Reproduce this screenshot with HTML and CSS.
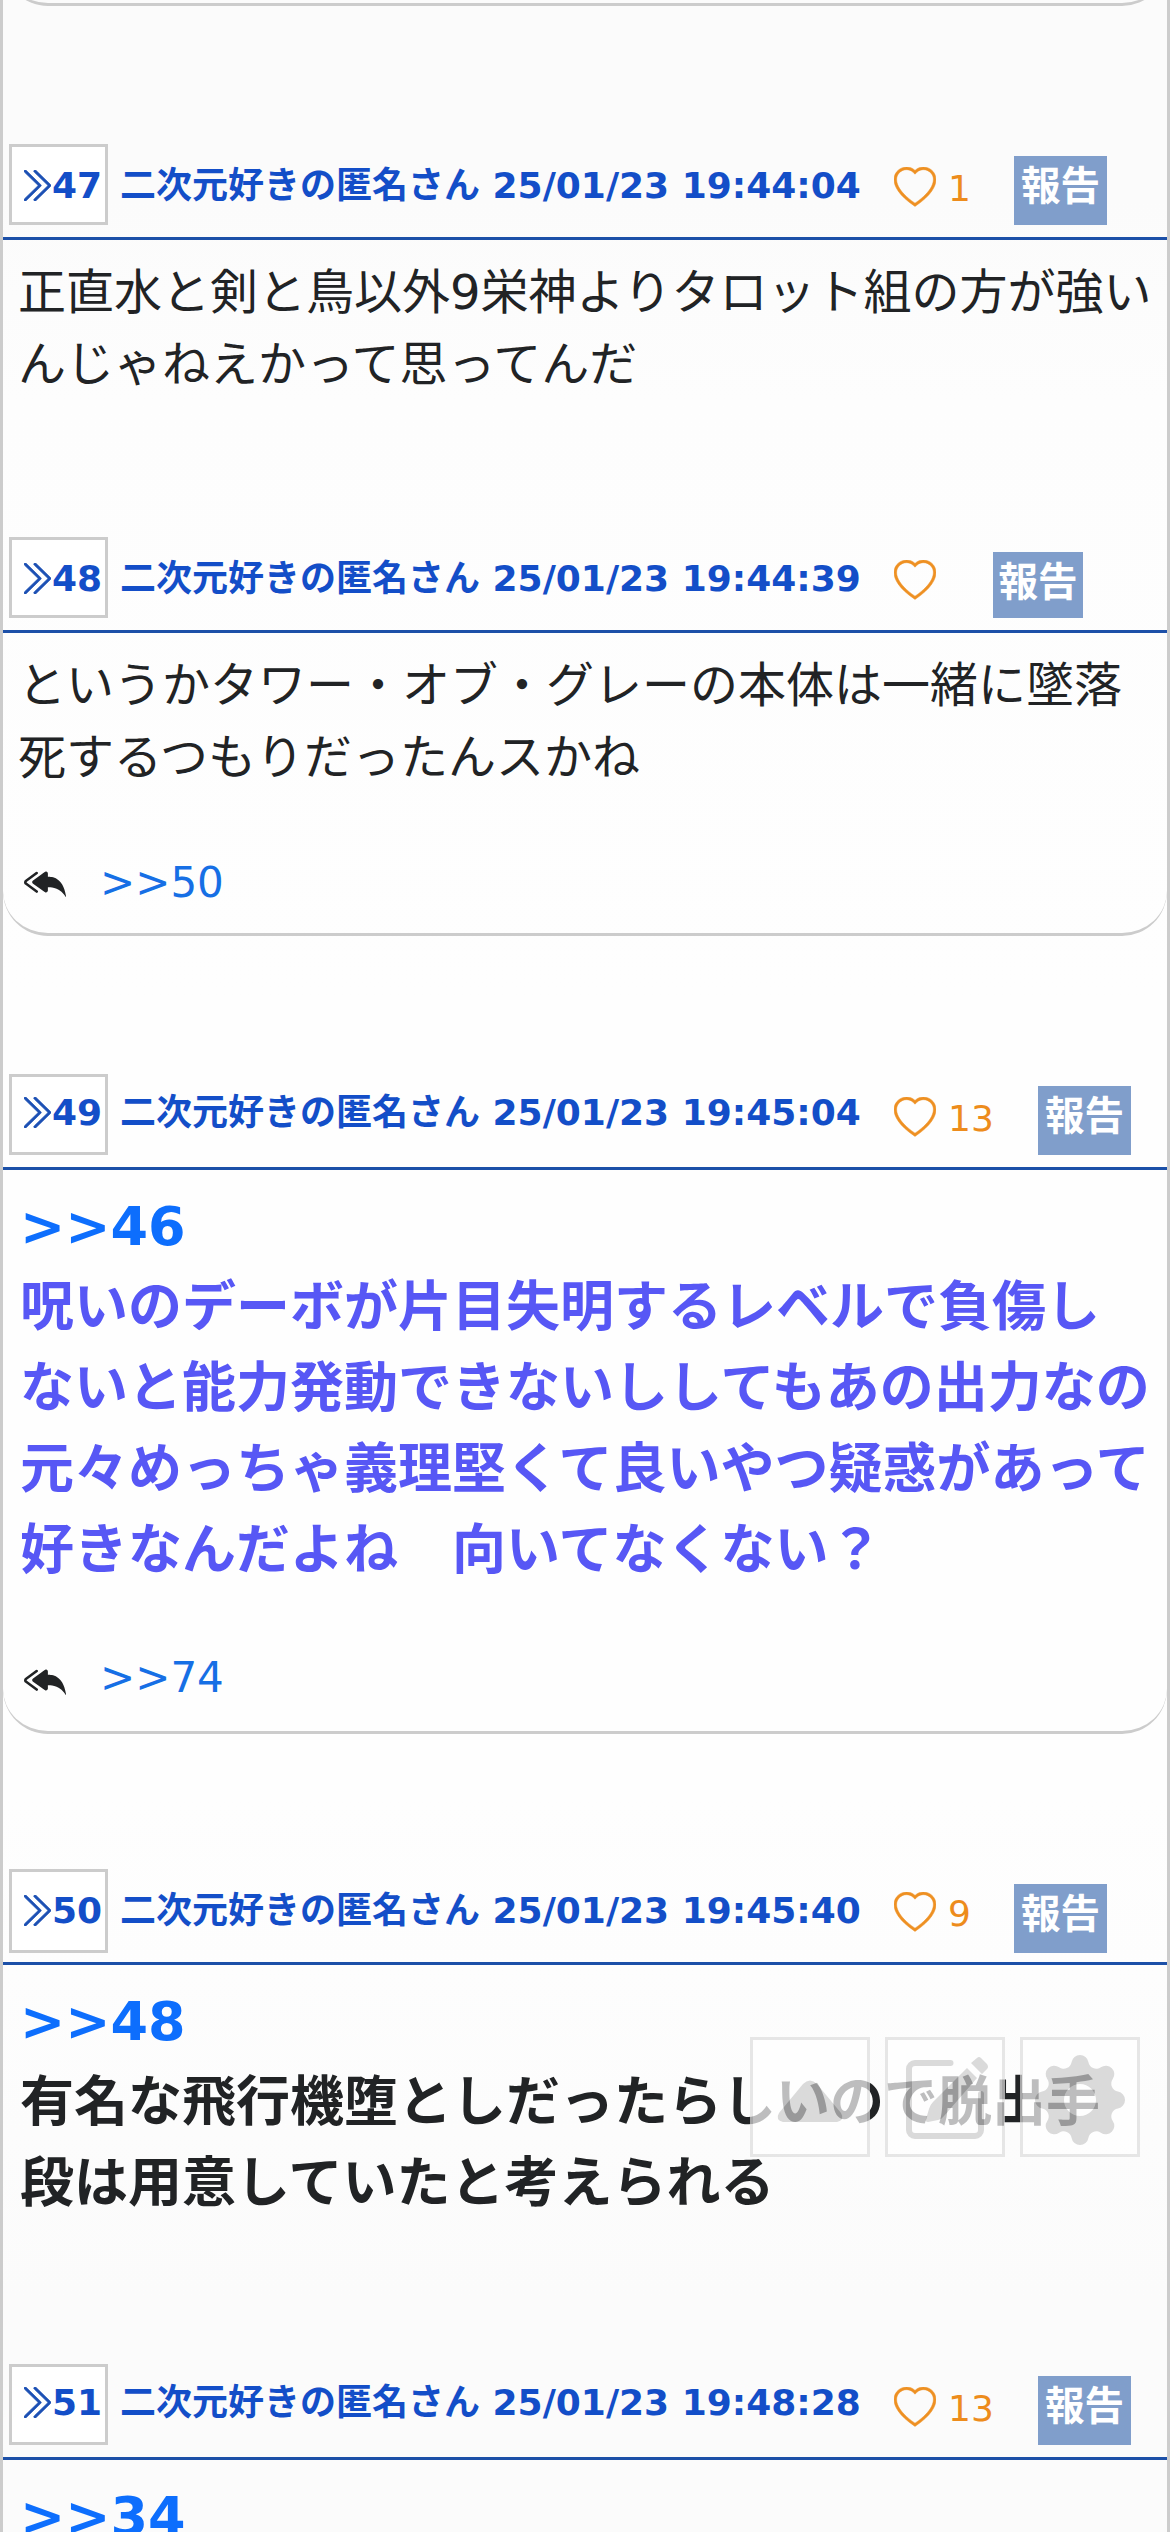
FILE: index.html
```html
<!DOCTYPE html>
<html lang="ja">
<head>
<meta charset="utf-8">
<title>スレッド</title>
<link rel="stylesheet" href="styles.css">
</head>
<body>
<svg class="symbols" aria-hidden="true">
  <symbol id="chevrons" viewBox="3.5 1.5 11 13" preserveAspectRatio="none">
    <path d="M3.646 1.646a.5.5 0 0 1 .708 0l6 6a.5.5 0 0 1 0 .708l-6 6a.5.5 0 0 1-.708-.708L9.293 8 3.646 2.354a.5.5 0 0 1 0-.708z"/>
    <path d="M7.646 1.646a.5.5 0 0 1 .708 0l6 6a.5.5 0 0 1 0 .708l-6 6a.5.5 0 0 1-.708-.708L13.293 8 7.646 2.354a.5.5 0 0 1 0-.708z"/>
  </symbol>
  <symbol id="heart" viewBox="0 0 16 16">
    <path d="m8 2.748-.717-.737C5.6.281 2.514.878 1.4 3.053c-.523 1.023-.641 2.5.314 4.385.92 1.815 2.834 3.989 6.286 6.357 3.452-2.368 5.365-4.542 6.286-6.357.955-1.886.838-3.362.314-4.385C13.486.878 10.4.28 8.717 2.01zM8 15C-7.333 4.868 3.279-3.04 7.824 1.143q.09.083.176.171a3 3 0 0 1 .176-.17C12.72-3.042 23.333 4.867 8 15"/>
  </symbol>
  <symbol id="reply-all" viewBox="0 0 16 16">
    <path d="M8.021 11.9 3.453 8.62a.719.719 0 0 1 0-1.238L8.021 4.1a.716.716 0 0 1 1.079.619V6c1.5 0 6 0 7 8-2.5-4.5-7-4-7-4v1.281c0 .56-.606.898-1.079.62z"/>
    <path d="M5.232 4.293a.5.5 0 0 1-.106.7L1.114 7.945l-.042.028a.147.147 0 0 0 0 .252l.042.028 4.012 2.954a.5.5 0 1 1-.593.805L.539 9.073a1.147 1.147 0 0 1 0-1.946l3.994-2.94a.5.5 0 0 1 .699.106z"/>
  </symbol>
</svg>
<main class="thread">
  <div class="previous"></div>

  <article class="post">
    <header class="head">
      <a class="number"><svg><use href="#chevrons"/></svg>47</a>
      <span class="name">二次元好きの匿名さん 25/01/23 19:44:04</span>
      <svg class="heart"><use href="#heart"/></svg>
      <span class="count">1</span>
      <a class="report">報告</a>
    </header>
    <div class="body body-short">正直水と剣と鳥以外9栄神よりタロット組の方が強い<br>んじゃねえかって思ってんだ</div>
  </article>

  <article class="post">
    <header class="head">
      <a class="number"><svg><use href="#chevrons"/></svg>48</a>
      <span class="name">二次元好きの匿名さん 25/01/23 19:44:39</span>
      <svg class="heart"><use href="#heart"/></svg>
      <a class="report report-empty">報告</a>
    </header>
    <div class="body">というかタワー・オブ・グレーの本体は一緒に墜落<br>死するつもりだったんスかね</div>
    <footer class="replies"><svg><use href="#reply-all"/></svg><a>&gt;&gt;50</a></footer>
  </article>

  <article class="post">
    <header class="head head-popular">
      <a class="number"><svg><use href="#chevrons"/></svg>49</a>
      <span class="name">二次元好きの匿名さん 25/01/23 19:45:04</span>
      <svg class="heart"><use href="#heart"/></svg>
      <span class="count">13</span>
      <a class="report">報告</a>
    </header>
    <div class="body large violet"><a>&gt;&gt;46</a><br>呪いのデーボが片目失明するレベルで負傷し<br>ないと能力発動できないししてもあの出力なの<br>元々めっちゃ義理堅くて良いやつ疑惑があって<br>好きなんだよね　向いてなくない？</div>
    <footer class="replies replies-large"><svg><use href="#reply-all"/></svg><a>&gt;&gt;74</a></footer>
  </article>

  <article class="post post-close">
    <header class="head head-tall">
      <a class="number"><svg><use href="#chevrons"/></svg>50</a>
      <span class="name">二次元好きの匿名さん 25/01/23 19:45:40</span>
      <svg class="heart"><use href="#heart"/></svg>
      <span class="count">9</span>
      <a class="report">報告</a>
    </header>
    <div class="body large body-last"><a>&gt;&gt;48</a><br>有名な飛行機堕としだったらしいので脱出手<br>段は用意していたと考えられる</div>
  </article>

  <article class="post">
    <header class="head head-popular">
      <a class="number"><svg><use href="#chevrons"/></svg>51</a>
      <span class="name">二次元好きの匿名さん 25/01/23 19:48:28</span>
      <svg class="heart"><use href="#heart"/></svg>
      <span class="count">13</span>
      <a class="report">報告</a>
    </header>
    <div class="body large"><a>&gt;&gt;34</a></div>
  </article>
</main>

<nav class="tools">
  <a class="tool"><svg viewBox="0 0 120 120"><path d="M33 85Q25 83 29 76L53 47Q60 40 67 47L91 76Q95 83 87 85Z"/></svg></a>
  <a class="tool"><svg viewBox="0 0 120 120">
    <path class="line" d="M65.500 26H30a6 6 0 0 0-6 6V93a6 6 0 0 0 6 6H90a6 6 0 0 0 6-6V57"/>
    <path d="M92 21Q94 19 96 21L102 27Q104 30 102 32L97 37L86 26ZM82 31L92 41L59 79Q57 82 53 83L43 85Q40 85 41 82L44 72Q45 68 48 65Z"/>
  </svg></a>
  <a class="tool"><svg viewBox="-60 -63 120 120"><path fill-rule="evenodd" d="M-8.380-37.930A8.500 8.500 0 0 1 8.380-37.930A8 8 0 0 0 20.890-32.740A8.500 8.500 0 0 1 32.740-20.890A8 8 0 0 0 37.930-8.380A8.500 8.500 0 0 1 37.930 8.380A8 8 0 0 0 32.740 20.890A8.500 8.500 0 0 1 20.890 32.740A8 8 0 0 0 8.380 37.930A8.500 8.500 0 0 1-8.380 37.930A8 8 0 0 0-20.890 32.740A8.500 8.500 0 0 1-32.740 20.890A8 8 0 0 0-37.930 8.380A8.500 8.500 0 0 1-37.930-8.380A8 8 0 0 0-32.740-20.890A8.500 8.500 0 0 1-20.890-32.740A8 8 0 0 0-8.380-37.930ZM0-16A16 16 0 0 0 0 16A16 16 0 0 0 0-16Z"/></svg></a>
</nav>
</body>
</html>
```
FILE: styles.css
```css
* {
  box-sizing: border-box;
}

body {
  position: relative;
  height: 2532px;
  margin: 0;
  overflow: hidden;
  color: #212325;
  font-family: "DejaVu Sans", "Noto Sans CJK JP", sans-serif;
  white-space: nowrap;
}

.symbols {
  display: none;
}

.thread {
  display: flow-root;
  height: 2532px;
  overflow: hidden;
  border: solid #ccc;
  border-width: 0 3px;
  background: linear-gradient(#fbfbfb 0, #fbfbfb 200px, #fdfdfd 400px, #fefefe 1000px, #fefefe 1800px, #fbfbfb 2300px);
}

.previous {
  height: 60px;
  margin-top: -54px;
  border-bottom: 3px solid #ccc;
  border-radius: 0 0 45px 45px;
}

.post {
  padding-top: 138px;
}

.post-close {
  padding-top: 135px;
}

.head {
  display: flex;
  align-items: flex-start;
  height: 96px;
  padding-left: 6px;
  border-bottom: 3px solid #1c50a8;
  color: #134ec8;
  font-size: 36px;
  line-height: 42px;
}

.number {
  display: flex;
  gap: 1px;
  width: 99px;
  height: 81px;
  padding: 18px 0 0 12px;
  border: 3px solid #ccc;
  background: #fff;
  font-weight: bold;
}

.head-tall .number {
  height: 84px;
}

.number svg {
  flex: none;
  width: 27px;
  height: 31px;
  margin-top: 5px;
  fill: #1c50b4;
  stroke: #1c50b4;
  stroke-width: .3;
}

.name {
  width: 774px;
  margin-left: 12px;
  padding-top: 21px;
  font-weight: bold;
}

.head-popular .number {
  padding-top: 15px;
}

.head-popular .name {
  padding-top: 18px;
}

.heart {
  flex: none;
  width: 42px;
  height: 42px;
  margin-top: 23px;
  fill: #ee9022;
  stroke: #ee9022;
  stroke-width: .2;
}

.count {
  width: 22px;
  margin-left: 12px;
  padding-top: 24px;
  color: #ed8c1c;
}

.head-popular .count {
  width: 46px;
}

.report {
  width: 93px;
  height: 69px;
  margin: 12px 0 0 44px;
  background: #809ecb;
  color: #fff;
  font-size: 39.6px;
  font-weight: bold;
  line-height: 60px;
  text-align: center;
}

.head-tall .report {
  margin-top: 15px;
}

.report-empty {
  width: 90px;
  height: 66px;
  margin: 15px 0 0 57px;
}

.body {
  padding: 16px 0 0 15px;
  font-size: 48px;
  line-height: 72px;
}

.body-short {
  height: 159px;
}

.large {
  padding-left: 17px;
  font-size: 54px;
  font-weight: bold;
  line-height: 81px;
}

.body-last {
  height: 261px;
}

.violet {
  color: #5757f5;
}

.large a {
  color: #0d6efd;
}

.replies {
  display: flex;
  height: 143px;
  padding: 58px 0 0 21px;
  border-bottom: 3px solid #ccc;
  border-radius: 0 0 45px 45px;
  font-size: 42px;
  line-height: 63px;
}

.replies svg {
  width: 42px;
  height: 42px;
  margin: 10px 34px 0 0;
  fill: #212325;
}

.replies a {
  color: #166fe5;
}

.replies-large {
  padding-top: 55px;
}

.replies-large svg {
  margin-top: 13px;
}

.tools {
  position: absolute;
  top: 2037px;
  right: 30px;
  display: flex;
  gap: 15px;
}

.tool {
  width: 120px;
  height: 120px;
  border: 3px solid #ddd;
  background: #fff;
  opacity: .7;
}

.tool svg {
  display: block;
  width: 120px;
  height: 120px;
  margin: -3px;
  fill: #ccc;
}

.tool .line {
  fill: none;
  stroke: #ccc;
  stroke-width: 6;
  stroke-linecap: round;
}
```
